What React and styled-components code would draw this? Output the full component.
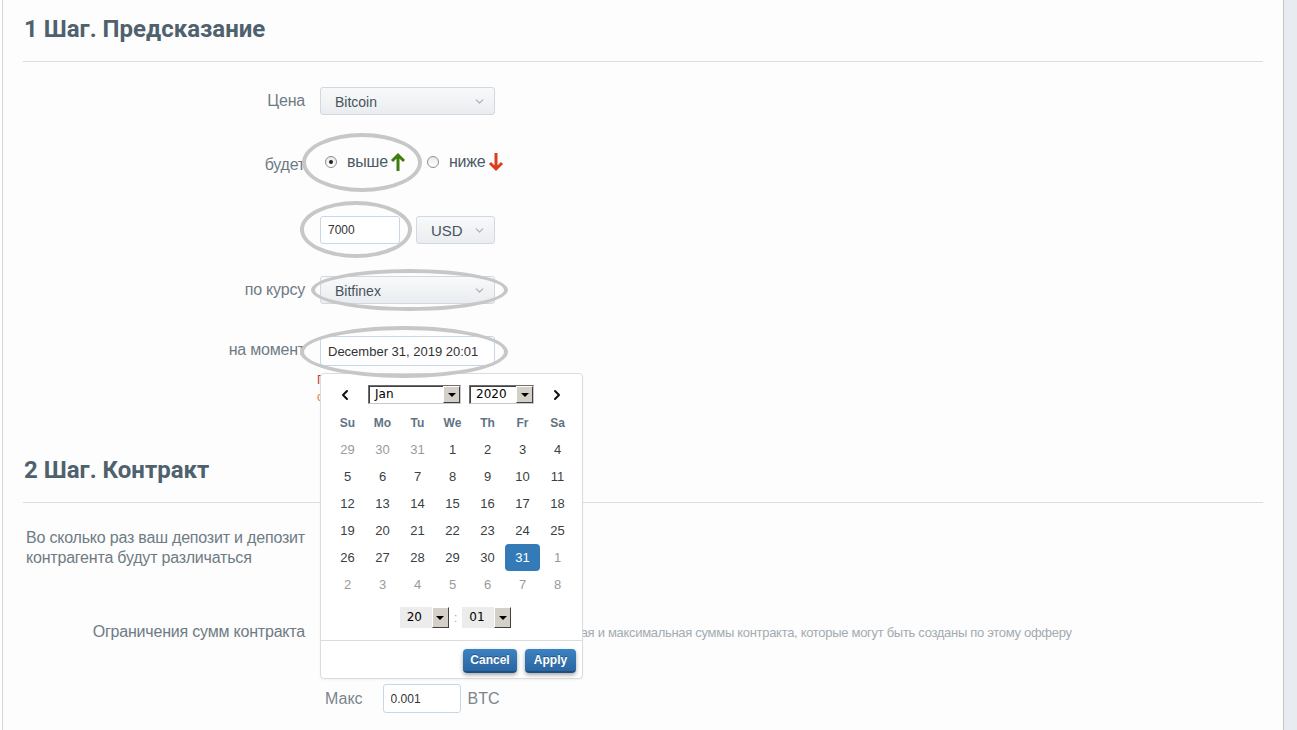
import React from "react";
import styled, { createGlobalStyle } from "styled-components";
import { ChevronDown, ChevronLeft, ChevronRight } from "lucide-react";

const GlobalStyle = createGlobalStyle`
  html, body { margin: 0; padding: 0; background: #fff; overflow: hidden; }
  body { font-family: "Liberation Sans", Arial, sans-serif; }
  * { box-sizing: border-box; }
`;

const Page = styled.div`
  display: flex;
  height: 730px;
  padding-left: 2px;
  background: #fff;
`;

const Panel = styled.main`
  flex: 1;
  position: relative;
  padding: 14px 20px 0 20px;
  border-left: 1px solid #d3d9df;
  border-right: 1px solid #c4c4c4;
  background: #fdfdfd;
`;

const Strip = styled.aside`
  width: 13px;
  background: #e8ecf0;
`;

const Section = styled.section`
  margin-top: ${(p) => p.$mt || 0}px;
`;

const Title = styled.h2`
  margin: 0;
  padding-left: 1px;
  font-family: Roboto, "Liberation Sans", sans-serif;
  font-weight: 700;
  font-size: 24px;
  line-height: 30px;
  color: #4f616d;
  letter-spacing: 0;
`;

const Rule = styled.hr`
  margin: 17px 0 0;
  border: 0;
  height: 1px;
  background: #d9dee2;
`;

const Form = styled.div`
  margin-top: 25px;
`;

const Row = styled.div`
  display: grid;
  grid-template-columns: 282px 1fr;
  column-gap: 15px;
  align-items: start;
  margin-top: ${(p) => p.$mt || 0}px;
  margin-bottom: ${(p) => (p.$mb === undefined ? 32 : p.$mb)}px;
`;

const Label = styled.div`
  position: relative;
  top: ${(p) => p.$dy || 0}px;
  text-align: right;
  font-size: 16px;
  line-height: 28px;
  color: #6f7b84;
  letter-spacing: -0.2px;
  white-space: nowrap;
`;

const Control = styled.div`
  position: relative;
  display: flex;
  flex-direction: ${(p) => (p.$col ? "column" : "row")};
  align-items: ${(p) => (p.$col ? "flex-start" : "center")};
  min-height: 28px;
`;

const Select = styled.div`
  display: flex;
  align-items: center;
  justify-content: space-between;
  width: ${(p) => p.$w}px;
  height: 28px;
  margin-left: ${(p) => p.$ml || 0}px;
  padding: 1px 8px 0 ${(p) => p.$pl || 14}px;
  border: 1px solid #d2d8de;
  border-radius: 3px;
  background: linear-gradient(#f8f9fa, #eaedf0);
  color: #47535d;
  font-size: ${(p) => p.$fs || 14}px;
`;

const TextInput = styled.input`
  width: ${(p) => p.$w}px;
  height: ${(p) => p.$h || 28}px;
  margin-left: ${(p) => p.$ml || 0}px;
  padding: 0 0 0 7px;
  border: 1px solid #c8d7e8;
  border-radius: 3px;
  background: #fff;
  font-family: "Liberation Sans", Arial, sans-serif;
  font-size: ${(p) => p.$fs || 12}px;
  color: #333;
  outline: none;
`;

const Radio = styled.span`
  display: inline-flex;
  align-items: center;
  justify-content: center;
  width: 12px;
  height: 12px;
  margin-left: ${(p) => p.$ml || 0}px;
  border: 1px solid #8e8e8e;
  border-radius: 50%;
  background: linear-gradient(#eaeaea, #fff);
  &::after {
    content: "";
    width: 4px;
    height: 4px;
    border-radius: 50%;
    background: ${(p) => (p.$checked ? "#222" : "transparent")};
  }
`;

const Choice = styled.span`
  margin-left: 10px;
  font-size: 16px;
  color: #4b5a66;
  letter-spacing: -0.2px;
`;

const Arrow = styled.svg`
  margin-left: 2px;
  flex: none;
`;

const Ellipse = styled.div`
  position: absolute;
  left: ${(p) => p.$x}px;
  top: ${(p) => p.$y}px;
  width: ${(p) => p.$w}px;
  height: ${(p) => p.$h}px;
  border: 4px solid #c7c7c7;
  border-radius: 50%;
  pointer-events: none;
  z-index: 10;
`;

const DateField = styled.div`
  position: relative;
`;

const Note = styled.div`
  margin: 6px 0 0 -3px;
  font-size: 12px;
  line-height: 17px;
  color: ${(p) => p.$c || "#c0392b"};
`;

const Picker = styled.div`
  position: absolute;
  top: calc(100% + 7px);
  left: 0;
  width: 263px;
  padding-top: 11px;
  border: 1px solid #dcdcdc;
  border-radius: 4px;
  background: #fff;
  box-shadow: 0 1px 2px rgba(0, 0, 0, 0.05);
  z-index: 5;
`;

const PickerHead = styled.div`
  display: flex;
  align-items: center;
  gap: 8px;
  height: 19px;
  padding-left: 9px;
`;

const Nav = styled.div`
  display: flex;
  align-items: center;
  justify-content: center;
  width: 30px;
  height: 19px;
  color: #111;
`;

const ClassicSelect = styled.div`
  display: flex;
  width: ${(p) => p.$w}px;
  height: 19px;
  border: 1px solid #6d6d6d;
  border-right-color: #c8c8c8;
  border-bottom-color: #c8c8c8;
  background: #fff;
  box-shadow: inset 1px 1px 0 #404040;
`;

const ClassicText = styled.span`
  flex: 1;
  padding-left: 6px;
  font-family: "DejaVu Sans", sans-serif;
  font-size: 12px;
  line-height: 17px;
  color: #000;
`;

const ClassicButton = styled.span`
  display: flex;
  align-items: center;
  justify-content: center;
  width: 17px;
  height: 100%;
  background: #d4d0c8;
  border: 1px solid;
  border-color: #fff #404040 #404040 #fff;
  &::after {
    content: "";
    border-left: 4px solid transparent;
    border-right: 4px solid transparent;
    border-top: 4px solid #000;
  }
`;

const Grid = styled.div`
  display: grid;
  grid-template-columns: repeat(7, 35px);
  grid-auto-rows: 27px;
  margin: 5px 0 0 9px;
`;

const DayHead = styled.div`
  display: flex;
  align-items: center;
  justify-content: center;
  font-size: 12px;
  font-weight: 700;
  color: #5f7384;
`;

const Day = styled.div`
  display: flex;
  align-items: center;
  justify-content: center;
  font-size: 13px;
  border-radius: 4px;
  color: ${(p) => (p.$sel ? "#fff" : p.$off ? "#9a9a9a" : "#3a3f44")};
  background: ${(p) => (p.$sel ? "#337ab7" : "transparent")};
`;

const TimeRow = styled.div`
  display: flex;
  align-items: center;
  justify-content: center;
  gap: 5px;
  height: 21px;
  margin-top: 9px;
  padding-left: 8px;
`;

const TimeSelect = styled.div`
  display: flex;
  width: 49px;
  height: 21px;
  background: #ececec;
`;

const TimeText = styled.span`
  flex: 1;
  padding-left: 7px;
  font-family: "DejaVu Sans", sans-serif;
  font-size: 12px;
  line-height: 21px;
  color: #000;
`;

const Colon = styled.span`
  font-size: 13px;
  color: #aaa;
`;

const PickerFoot = styled.div`
  display: flex;
  justify-content: flex-end;
  gap: 8px;
  margin-top: 12px;
  padding: 8px 6px 5px;
  border-top: 1px solid #dcdcdc;
`;

const Btn = styled.button`
  width: ${(p) => p.$w}px;
  height: 24px;
  padding: 0;
  border: 0;
  border-bottom: 2px solid #1e4f7e;
  border-radius: 4px;
  background: linear-gradient(#3c82c2, #2a66a3);
  box-shadow: 0 2px 4px rgba(0, 0, 0, 0.35);
  color: #fff;
  font-family: "Liberation Sans", Arial, sans-serif;
  font-size: 12px;
  font-weight: 700;
  text-shadow: 0 -1px 0 rgba(0, 0, 0, 0.35);
`;

const Paragraph = styled.p`
  margin: 25px 0 0 3px;
  font-size: 16px;
  line-height: 20px;
  color: #6f7b84;
  letter-spacing: -0.2px;
`;

const Unit = styled.span`
  margin-left: ${(p) => p.$ml || 0}px;
  font-size: 16px;
  color: #7b858c;
`;

const Help = styled.span`
  margin-left: ${(p) => p.$ml || 0}px;
  font-size: 13px;
  color: #a3abb1;
  letter-spacing: -0.3px;
  white-space: nowrap;
`;

const chevron = <ChevronDown size={13} strokeWidth={2} color="#a7afb6" />;

const UpArrow = () => (
  <Arrow width="16" height="20" viewBox="0 0 16 20">
    <path d="M8 19V3M2 9l6-6 6 6" stroke="#3f7d10" strokeWidth="3" fill="none" />
  </Arrow>
);

const DownArrow = () => (
  <Arrow width="16" height="20" viewBox="0 0 16 20">
    <path d="M8 1v16M2 11l6 6 6-6" stroke="#dc3d1c" strokeWidth="3" fill="none" />
  </Arrow>
);

const weeks = [
  [29, 30, 31, 1, 2, 3, 4],
  [5, 6, 7, 8, 9, 10, 11],
  [12, 13, 14, 15, 16, 17, 18],
  [19, 20, 21, 22, 23, 24, 25],
  [26, 27, 28, 29, 30, 31, 1],
  [2, 3, 4, 5, 6, 7, 8],
];

const DatePicker = () => (
  <Picker>
    <PickerHead>
      <Nav><ChevronLeft size={16} strokeWidth={3} /></Nav>
      <ClassicSelect $w={93}>
        <ClassicText>Jan</ClassicText>
        <ClassicButton />
      </ClassicSelect>
      <ClassicSelect $w={65}>
        <ClassicText>2020</ClassicText>
        <ClassicButton />
      </ClassicSelect>
      <Nav><ChevronRight size={16} strokeWidth={3} /></Nav>
    </PickerHead>
    <Grid>
      {["Su", "Mo", "Tu", "We", "Th", "Fr", "Sa"].map((d) => (
        <DayHead key={d}>{d}</DayHead>
      ))}
      {weeks.map((w, wi) =>
        w.map((d, di) => {
          const off = (wi === 0 && d > 20) || (wi >= 4 && d < 20);
          return (
            <Day key={wi + "-" + di} $off={off} $sel={wi === 4 && d === 31}>
              {d}
            </Day>
          );
        })
      )}
    </Grid>
    <TimeRow>
      <TimeSelect>
        <TimeText>20</TimeText>
        <ClassicButton />
      </TimeSelect>
      <Colon>:</Colon>
      <TimeSelect>
        <TimeText>01</TimeText>
        <ClassicButton />
      </TimeSelect>
    </TimeRow>
    <PickerFoot>
      <Btn $w={54}>Cancel</Btn>
      <Btn $w={51}>Apply</Btn>
    </PickerFoot>
  </Picker>
);

export default function App() {
  return (
    <Page>
      <GlobalStyle />
      <Panel>
        <Section>
          <Title>1 Шаг. Предсказание</Title>
          <Rule />
          <Form>
            <Row $mb={33}>
              <Label>Цена</Label>
              <Control>
                <Select $w={175}>Bitcoin{chevron}</Select>
              </Control>
            </Row>
            <Row $mb={40}>
              <Label $dy={3}>будет</Label>
              <Control>
                <Ellipse $x={-18} $y={-15} $w={120} $h={59} />
                <Radio $ml={5} $checked />
                <Choice>выше</Choice>
                <UpArrow />
                <Radio $ml={21} />
                <Choice>ниже</Choice>
                <DownArrow />
              </Control>
            </Row>
            <Row>
              <Label />
              <Control>
                <Ellipse $x={-20} $y={-15} $w={112} $h={57} />
                <TextInput $w={80} readOnly value="7000" />
                <Select $w={79} $ml={16} $fs={15}>USD{chevron}</Select>
              </Control>
            </Row>
            <Row>
              <Label>по курсу</Label>
              <Control>
                <Ellipse $x={-9} $y={-7} $w={197} $h={42} />
                <Select $w={175}>Bitfinex{chevron}</Select>
              </Control>
            </Row>
            <Row $mb={0}>
              <Label>на момент</Label>
              <Control $col>
                <Ellipse $x={-20} $y={-10} $w={208} $h={52} />
                <DateField>
                  <TextInput $w={175} $h={30} $fs={13} readOnly value="December 31, 2019 20:01" />
                  <DatePicker />
                </DateField>
                <Note>
                  Пожалуйста, выберите дату в будущем
                  <br />
                  <span style={{ color: "#e07a3a" }}>о</span>
                </Note>
              </Control>
            </Row>
          </Form>
        </Section>

        <Section $mt={49}>
          <Title>2 Шаг. Контракт</Title>
          <Rule />
          <Paragraph>
            Во сколько раз ваш депозит и депозит
            <br />
            контрагента будут различаться
          </Paragraph>
          <Row $mt={50} $mb={37}>
            <Label>Ограничения сумм контракта</Label>
            <Control>
              <Unit $ml={5}>Мин</Unit>
              <TextInput $w={78} $h={29} $ml={26} readOnly value="0.0001" />
              <Unit $ml={7}>BTC</Unit>
              <Help $ml={14}>
                Минимальная и максимальная суммы контракта, которые могут быть созданы по этому офферу
              </Help>
            </Control>
          </Row>
          <Row>
            <Label />
            <Control>
              <Unit $ml={5}>Макс</Unit>
              <TextInput $w={78} $h={29} $ml={20} readOnly value="0.001" />
              <Unit $ml={7}>BTC</Unit>
            </Control>
          </Row>
        </Section>
      </Panel>
      <Strip />
    </Page>
  );
}
